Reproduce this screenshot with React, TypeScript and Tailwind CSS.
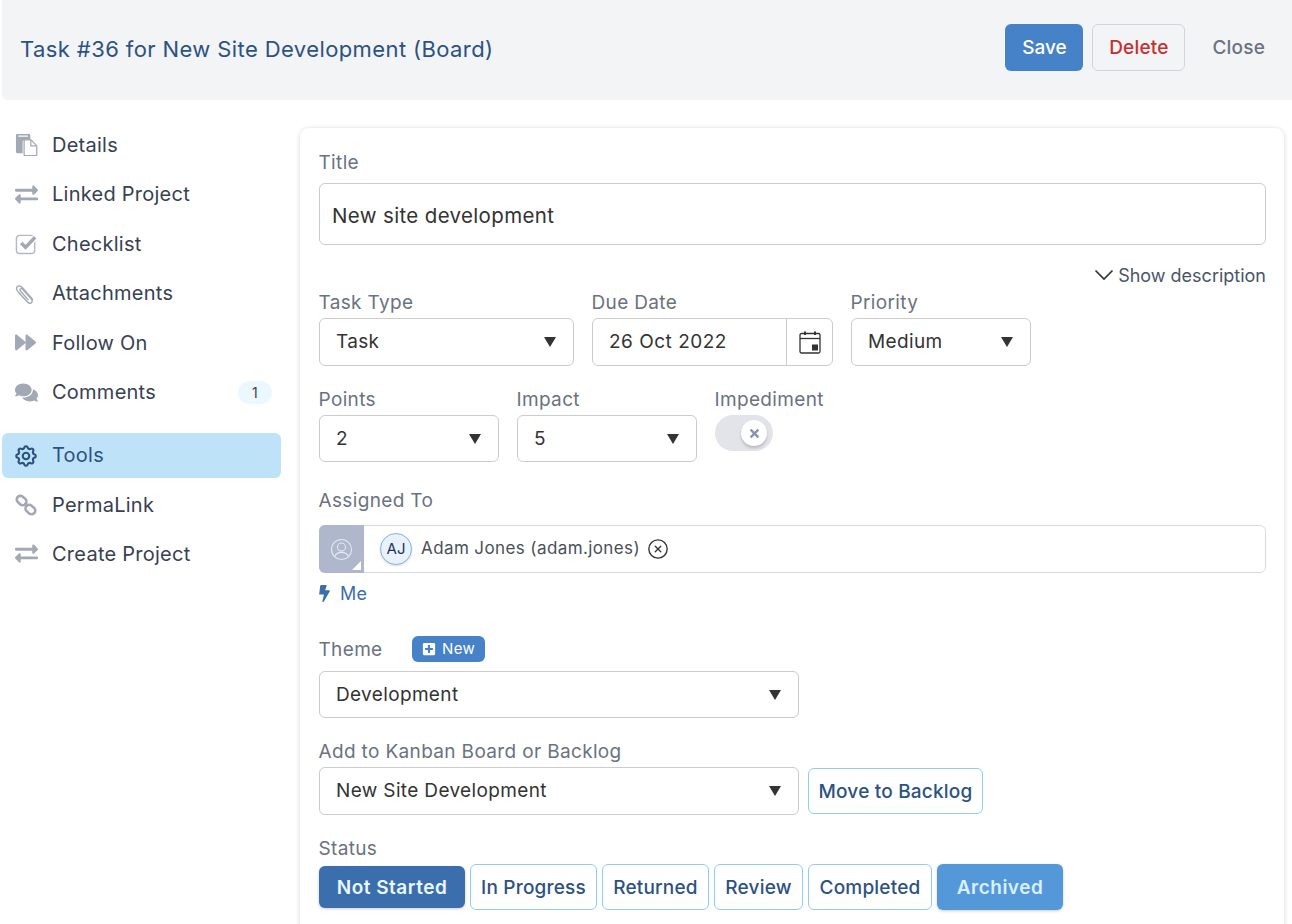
import React from "react";
import { FaBolt, FaComments, FaExchangeAlt, FaForward, FaPlusSquare, FaTimes } from "react-icons/fa";
import { HiOutlineCog } from "react-icons/hi";
import { LuCircleX } from "react-icons/lu";

function PasteIcon() {
  return (
    <svg viewBox="0 0 24 24" className="size-[23px] text-[#a3a8b5]" fill="currentColor">
      <path d="M1 2.500C1 1.500 1.700 1 2.500 1h12C15.500 1 16 1.500 16 2.500V7h-5.500C9 7 8 8 8 9.500V21H2.500C1.500 21 1 20.300 1 19.500Z" />
      <path d="M3.500 2.600h10v1.300h-10Z" fill="#fff" />
      <path d="M10.500 7.200h6.200l6 6v9.600c0 .4-.3.7-.7.7H10.500c-.6 0-1-.4-1-1V8.200c0-.6.4-1 1-1Z" fill="#fff" stroke="currentColor" strokeWidth="1.300" />
      <path d="M16.500 7.500V13.500h6" fill="none" stroke="currentColor" strokeWidth="1.300" />
    </svg>
  );
}

function CheckIcon() {
  return (
    <svg viewBox="0 0 24 24" className="size-[23px] text-[#a3a8b5]" fill="none" stroke="currentColor">
      <rect x="1.500" y="3.500" width="19" height="19" rx="3.500" strokeWidth="1.500" stroke="#b4b8c3" />
      <path d="M6.500 11.500 11 16 22 4.500" stroke="#fff" strokeWidth="6" />
      <path d="M6.500 11.500 11 16 21 5.500" strokeWidth="3.600" />
    </svg>
  );
}

function ClipIcon() {
  return (
    <svg viewBox="0 0 24 24" className="size-[21px] text-[#a3a8b5]" fill="none" stroke="currentColor" strokeWidth="1.600" strokeLinecap="round">
      <path d="M20 18.500 8.500 5.500C6.500 3.200 3.800 2.700 2.500 4.200 1.200 5.700 1.800 8 3.600 10.200L14 21.500c1.500 1.600 3.600 2 4.800 1 1.300-1.100 1-3-.3-4.500L9 7.500C8 6.400 6.800 6.100 6.100 6.800c-.7.7-.4 1.800.5 2.900l8.400 9.300" />
    </svg>
  );
}

function ChainIcon() {
  return (
    <svg viewBox="0 0 24 24" className="size-[22px] text-[#a3a8b5]" fill="none" stroke="currentColor" strokeWidth="2.800">
      <rect x="1.500" y="3" width="11.500" height="8" rx="4" transform="rotate(40 7 7)" />
      <rect x="11" y="13" width="11.500" height="8" rx="4" transform="rotate(40 16.800 17)" />
      <path d="M10.500 9.500 13.500 14" strokeWidth="2.400" />
    </svg>
  );
}

function UserIcon() {
  return (
    <svg viewBox="0 0 24 24" className="size-[23px] text-[#e6e9f0]" fill="none" stroke="currentColor" strokeWidth="1.100">
      <circle cx="12" cy="12" r="10.500" />
      <circle cx="12" cy="9.500" r="4.200" />
      <path d="M4.800 19.500C6 16.200 8.800 15 12 15s6 1.200 7.200 4.500" />
    </svg>
  );
}

function CalendarIcon() {
  return (
    <svg viewBox="0 0 22 24" className="h-[24px] w-[22px] text-[#333]" fill="none" stroke="currentColor" strokeWidth="1.300">
      <rect x="1" y="3.500" width="20" height="19.500" rx="1.500" />
      <path d="M1 8.500h20" />
      <path d="M6 1.500v3.500M16 1.500v3.500" strokeWidth="2" />
      <rect x="13" y="14.500" width="6" height="6" fill="currentColor" stroke="none" />
    </svg>
  );
}

function Label({ children }: { children: React.ReactNode }) {
  return <div className="-ml-[0.5px] h-[26px] text-[19px] leading-[26px] tracking-[0.35px] text-[#6b7280]">{children}</div>;
}

function Select({ value, className }: { value: string; className: string }) {
  return (
    <div className={`flex items-center justify-between rounded-[6px] border border-[#cccccc] bg-white pl-[16px] pr-[17px] text-[19px] tracking-[0.35px] text-[#333333] ${className}`}>
      <span>{value}</span>
      <span className="h-0 w-0 border-x-[6.500px] border-t-[10px] border-x-transparent border-t-[#333333]" />
    </div>
  );
}

const navIcon = "size-[23px] text-[#a3a8b5]";

const navTop = [
  { label: "Details", icon: <PasteIcon /> },
  { label: "Linked Project", icon: <FaExchangeAlt className={navIcon} /> },
  { label: "Checklist", icon: <CheckIcon /> },
  { label: "Attachments", icon: <ClipIcon /> },
  { label: "Follow On", icon: <FaForward className="size-[21px] text-[#a3a8b5]" /> },
  { label: "Comments", icon: <FaComments className={navIcon} /> },
];

const statuses = [
  { label: "In Progress", width: "w-[127px]" },
  { label: "Returned", width: "w-[107px]" },
  { label: "Review", width: "w-[89px]" },
  { label: "Completed", width: "w-[124px]" },
];

export default function App() {
  return (
    <div className="h-[924px] w-[1292px] overflow-hidden bg-white font-['Inter',sans-serif]">
      <div className="ml-[2px] flex h-[100px] items-center justify-between rounded-bl-[6px] bg-[#f3f4f6] pl-[18px] pr-[27px]">
        <div className="-mt-[2px] text-[22px] tracking-[0.4px] text-[#2c5282]">Task #36 for New Site Development (Board)</div>
        <div className="-mt-[6px] flex items-center">
          <button className="h-[47px] w-[78px] rounded-[6px] bg-[#4582c8] pt-[2px] text-[19px] font-medium text-white">Save</button>
          <button className="ml-[9px] h-[47px] w-[93px] rounded-[6px] border border-[#d1d5db] pt-[2px] text-[19px] font-medium tracking-[0.2px] text-[#c53030]">Delete</button>
          <span className="ml-[27px] mt-[3px] text-[19px] font-medium tracking-[0.2px] text-[#6b7280]">Close</span>
        </div>
      </div>

      <div className="flex">
        <div className="ml-[2px] w-[279px] pt-[20px]">
          {navTop.map((n) => (
            <div key={n.label} className="flex h-[49.500px] items-center pl-[13px] pr-[9px] text-[20px] tracking-[0.25px] text-[#374151]">
              <span className="flex w-[37px] justify-start">{n.icon}</span>
              <span className="flex-1">{n.label}</span>
              {n.label === "Comments" && (
                <span className="flex h-[23px] w-[34px] items-center justify-center rounded-full bg-[#ebf8ff] text-[14px] text-[#374151]">1</span>
              )}
            </div>
          ))}
          <div className="mt-[16px] flex h-[45px] items-center rounded-[6px] bg-[#bee3f8] pb-[2px] pl-[11px] text-[20px] tracking-[0.25px] text-[#2c5282]">
            <HiOutlineCog className="mr-[13px] mt-[2px] size-[26px]" />
            Tools
          </div>
          <div className="mt-[2.500px] flex h-[49.500px] items-center pl-[13px] text-[20px] tracking-[0.25px] text-[#374151]">
            <span className="w-[37px]"><ChainIcon /></span>
            PermaLink
          </div>
          <div className="-mt-px flex h-[49.500px] items-center pl-[13px] text-[20px] tracking-[0.25px] text-[#374151]">
            <span className="w-[37px]"><FaExchangeAlt className={navIcon} /></span>
            Create Project
          </div>
        </div>

        <div className="ml-[18px] mt-[27px] h-[900px] w-[986px] rounded-[10px] border border-[#edf0f3] pl-[19px] pr-[18px] pt-[22px] shadow-[0_1px_4px_rgba(0,0,0,0.12)]">
          <Label>Title</Label>
          <div className="mt-[7px] flex h-[62px] items-center rounded-[6px] border border-[#cccccc] pl-[12px] pt-[4px] text-[20.500px] tracking-[0.35px] text-[#333333]">New site development</div>
          <div className="mt-[16px] flex h-[28px] items-center justify-end text-[18px] text-[#4a5568]">
            <svg viewBox="0 0 20 12" className="mr-[4px] h-[12px] w-[20px] text-[#333333]" fill="none" stroke="currentColor" strokeWidth="1.700">
              <path d="M1.500 1.500 10 10 18.500 1.500" />
            </svg>
            Show description
          </div>

          <div className="mt-[1px] flex gap-[18px]">
            <div>
              <Label>Task Type</Label>
              <Select value="Task" className="mt-[2px] h-[48px] w-[255px]" />
            </div>
            <div>
              <Label>Due Date</Label>
              <div className="mt-[2px] flex h-[48px] w-[241px] items-center rounded-[6px] border border-[#cccccc] text-[19px] tracking-[0.5px] text-[#333333]">
                <span className="flex-1 pl-[16px]">26 Oct 2022</span>
                <span className="flex h-full w-[46px] items-center justify-center border-l border-[#cccccc]"><CalendarIcon /></span>
              </div>
            </div>
            <div>
              <Label>Priority</Label>
              <Select value="Medium" className="mt-[2px] h-[48px] w-[180px]" />
            </div>
          </div>

          <div className="mt-[21px] flex gap-[18px]">
            <div>
              <Label>Points</Label>
              <Select value="2" className="mt-[2px] h-[47px] w-[180px] pt-[1px]" />
            </div>
            <div>
              <Label>Impact</Label>
              <Select value="5" className="mt-[2px] h-[47px] w-[180px] pt-[1px]" />
            </div>
            <div>
              <Label>Impediment</Label>
              <div className="mt-[2px] flex h-[36px] w-[58px] items-center justify-end rounded-full bg-[#e2e4e9] pr-[6px]">
                <span className="flex size-[26px] items-center justify-center rounded-full bg-white shadow-[0_2px_3px_rgba(0,0,0,0.2)]">
                  <FaTimes className="size-[13px] text-[#8a94a6]" />
                </span>
              </div>
            </div>
          </div>

          <div className="mt-[26px]"><Label>Assigned To</Label></div>
          <div className="mt-[11px] flex h-[48px] rounded-[6px] border border-[#d8dbe2]">
            <div className="relative -my-px -ml-px flex h-[48px] w-[45px] items-center justify-center rounded-l-[6px] bg-[#afb7cc]">
              <UserIcon />
              <span className="absolute bottom-[3px] right-[3px] h-0 w-0 border-b-[9px] border-l-[9px] border-b-white border-l-transparent" />
            </div>
            <div className="-ml-[2px] flex flex-1 items-center rounded-[6px] bg-white pl-[18px] text-[17px] tracking-[0.4px] text-[#4a4f57]">
              <span className="mr-[9px] flex size-[32px] items-center justify-center rounded-full border border-[#7db8e8] bg-[#ebf1fa] text-[15px] tracking-normal text-[#1a365d] shadow-[0_1px_2px_rgba(0,0,0,0.15)]">AJ</span>
              Adam Jones (adam.jones)
              <LuCircleX className="ml-[7px] size-[22px] text-[#333333]" strokeWidth={1.500} />
            </div>
          </div>
          <div className="mt-[8px] flex h-[24px] items-center text-[18px] tracking-[0.2px] text-[#3b6eab]">
            <FaBolt className="-ml-[3px] mr-[7px] size-[17px]" />
            Me
          </div>

          <div className="mt-[32px] flex h-[26px] items-center">
            <span className="-ml-[0.5px] text-[19px] tracking-[0.35px] text-[#6b7280]">Theme</span>
            <span className="-mt-[2px] ml-[29.500px] flex h-[26px] w-[73px] items-center justify-center rounded-[6px] bg-[#4582c8] text-[15px] tracking-[0.3px] text-white">
              <FaPlusSquare className="mr-[6px] size-[14px]" />
              New
            </span>
          </div>
          <Select value="Development" className="mt-[8px] h-[47px] w-[480px] pt-[1px]" />

          <div className="mt-[21px]"><Label>Add to Kanban Board or Backlog</Label></div>
          <div className="mt-[2px] flex items-center">
            <Select value="New Site Development" className="h-[48px] w-[480px]" />
            <button className="ml-[9px] h-[46px] w-[175px] rounded-[6px] border border-[#90cdf4] pt-[2px] text-[19px] font-medium tracking-[0.2px] text-[#2c5282]">Move to Backlog</button>
          </div>

          <div className="mt-[21px]"><Label>Status</Label></div>
          <div className="mt-[2px] flex items-center">
            <button className="h-[42px] w-[146px] rounded-[6px] bg-[#3a6ead] pt-[2px] text-[19px] font-semibold tracking-[0.5px] text-[#ebf8ff] shadow-[0_1px_3px_rgba(0,0,0,0.2)]">Not Started</button>
            {statuses.map((s) => (
              <button key={s.label} className={`ml-[5px] h-[46px] rounded-[6px] border border-[#90cdf4] pt-[2px] text-[19px] font-medium tracking-[0.2px] text-[#2c5282] ${s.width}`}>{s.label}</button>
            ))}
            <button className="ml-[5px] h-[46px] w-[126px] rounded-[6px] bg-[#5598da] pt-[2px] text-[19px] font-semibold tracking-[0.5px] text-[#d8f0fb] shadow-[0_1px_3px_rgba(0,0,0,0.2)]">Archived</button>
          </div>
        </div>
      </div>
    </div>
  );
}
